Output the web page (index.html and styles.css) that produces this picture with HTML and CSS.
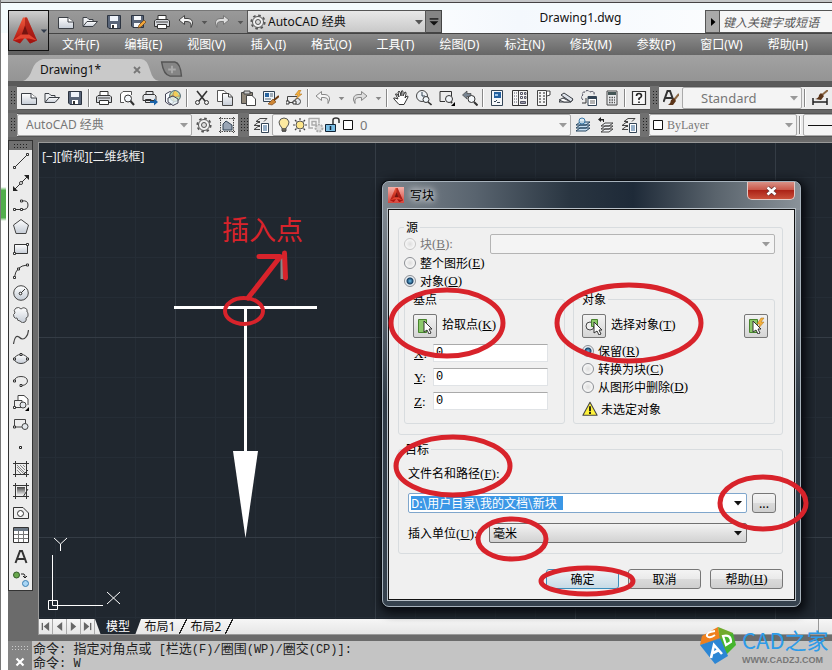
FILE: index.html
```html
<!DOCTYPE html>
<html lang="zh-CN">
<head>
<meta charset="utf-8">
<title>Drawing1.dwg</title>
<link rel="stylesheet" href="styles.css">
</head>
<body>
<svg class="defs" aria-hidden="true">
  <defs>
    <linearGradient id="shade" x1="0" y1="0" x2="0" y2="1"><stop offset="0" stop-color="#fff"/><stop offset="1" stop-color="#c5ccd6"/></linearGradient>
    <linearGradient id="dark" x1="0" y1="0" x2="0" y2="1"><stop offset="0" stop-color="#444"/><stop offset="1" stop-color="#eee"/></linearGradient>
    <linearGradient id="redA" x1="0" y1="0" x2="0" y2="1"><stop offset="0" stop-color="#ef5a3c"/><stop offset="1" stop-color="#a80f0c"/></linearGradient>
    <pattern id="grid" width="200" height="200" patternUnits="userSpaceOnUse" x="175" y="337">
      <path d="M40.500 0V200M80.500 0V200M120.500 0V200M160.500 0V200M0 40.500H200M0 80.500H200M0 120.500H200M0 160.500H200" stroke="#252d36"/>
      <path d="M.5 0V200M0 .5H200" stroke="#343c45"/>
    </pattern>
  </defs>
  <symbol id="new" viewBox="0 0 16 16"><path d="M.5 3.500H10L15.500 8V14.500H.5Z" fill="url(#shade)" stroke="#3b3f45"/><path d="M10 3.500V8H15.500" fill="#fff" stroke="#3b3f45"/></symbol>
  <symbol id="open" viewBox="0 0 16 16"><path d="M1 12V3.500H5L7 5.500H11V8" fill="#eef0f3" stroke="#3b3f45"/><path d="M1 12.500L5 7.500H15.500L11 12.500Z" fill="url(#shade)" stroke="#3b3f45"/></symbol>
  <symbol id="save" viewBox="0 0 16 16"><path d="M1.500 1.500H14.500V14.500H3L1.500 13Z" fill="#596579" stroke="#2c3440"/><path d="M4 2H12V7H4Z" fill="#eef3fa"/><path d="M5 10H11V14H5Z" fill="#fff"/><path d="M6 11H8V14H6Z" fill="#333"/></symbol>
  <symbol id="saveas" viewBox="0 0 16 16"><path d="M1.500 1.500H13.500V13.500H3L1.500 12Z" fill="#596579" stroke="#2c3440"/><path d="M4 2H11V6H4ZM4 9H10V13H4Z" fill="#f5f7fa"/><path d="M8 14L9 11L14 6L16 8L11 13Z" fill="#f0a53a" stroke="#68401a" stroke-width=".7"/></symbol>
  <symbol id="print" viewBox="0 0 16 16"><path d="M4 6V1.500H12V6" fill="#fff" stroke="#333"/><path d="M2 5.500H14L15.500 7V12.500H.5V7Z" fill="#d4d7dc" stroke="#333"/><path d="M3.500 10.500H12.500V14.500H3.500Z" fill="#fff" stroke="#333"/><path d="M2 8H14" stroke="#444"/></symbol>
  <symbol id="preview" viewBox="0 0 16 16"><path d="M5 12.500H1.500V4L4 1.500H12.500V5" fill="#fff" stroke="#555"/><circle cx="9" cy="8.500" r="3.500" fill="#f4f8fc" stroke="#333"/><path d="M11.500 11L15 15" stroke="#333" stroke-width="2"/></symbol>
  <symbol id="plot" viewBox="0 0 16 16"><path d="M4 5V1.500H11V5M2 4.500H12.500L14 6V10.500H1V6ZM3.500 9.500H9V12.500H3.500Z" fill="#e7e9ec" stroke="#333"/><path d="M8 11H12V8.500L16 12L12 15.500V13H8Z" fill="#1b63a8"/></symbol>
  <symbol id="globe" viewBox="0 0 16 16"><path d="M.5 4L5 1.500L9 4V12L5 15L.5 12Z" fill="#f8fbff" stroke="#445"/><circle cx="10" cy="6" r="5.400" fill="#bcdcab" stroke="#4a6570"/><path d="M10 1Q6 5 9 11M5 6H15" fill="none" stroke="#d08a3a"/><path d="M10 1Q14 3 13 6H9Q8 3 10 1Z" fill="#f4cd55"/><path d="M3 8L8 6L13 9V13L8 15.500L3 12Z" fill="#e6f1f5" fill-opacity=".75" stroke="#445"/></symbol>
  <symbol id="cut" viewBox="0 0 16 16"><path d="M3 1L11 11M13 1L5 11" stroke="#333" stroke-width="1.600"/><circle cx="3.500" cy="12.500" r="2" fill="none" stroke="#333"/><circle cx="12.500" cy="12.500" r="2" fill="none" stroke="#333"/></symbol>
  <symbol id="copy" viewBox="0 0 16 16"><path d="M.5 .5H7L9.500 3V11.500H.5Z" fill="#fff" stroke="#555"/><path d="M5.500 3.500H12L15.500 7V15.500H5.500Z" fill="url(#shade)" stroke="#444"/><path d="M11.500 3.500V7H15" fill="none" stroke="#444"/></symbol>
  <symbol id="paste" viewBox="0 0 16 16"><path d="M1.500 2.500H12.500V13.500H1.500Z" fill="#8f8678" stroke="#444"/><path d="M4 1H10V4H4Z" fill="#ccc" stroke="#444"/><path d="M6.500 5.500H12L15.500 9V15.500H6.500Z" fill="#fff" stroke="#444"/></symbol>
  <symbol id="match" viewBox="0 0 16 16"><path d="M.5 1.500H11.500V11.500H.5Z" fill="#eef4fa" stroke="#345"/><path d="M2 3H6V7H2Z" fill="#2865a0"/><path d="M7 4H10M7 6H10M2 9H8" stroke="#567"/><path d="M16 6L10 11" stroke="#6b3d14" stroke-width="2"/><path d="M10 9L13 12L9 15L5 14Z" fill="#ce8635" stroke="#6b3d14" stroke-width=".6"/></symbol>
  <symbol id="block" viewBox="0 0 16 16"><path d="M1.500 12.500V6.500H11M1.500 12.500H10" fill="none" stroke="#444"/><circle cx="11.500" cy="11.500" r="3" fill="#e5e8ec" stroke="#444"/><path d="M0 11H3V14H0ZM7 11H10V14H7Z" fill="#fff" stroke="#333"/><path d="M13 0L9 5H12L10 9L16 4H13L15 0Z" fill="#f6b13c" stroke="#a86a16" stroke-width=".5"/></symbol>
  <symbol id="undo" viewBox="0 0 16 16"><path d="M1 6L6.500 1.500V4.500H10Q15 5 14.500 10L13 13.500V10Q12.500 7.500 9 7.500H6.500V10.500Z" fill="#f5f5f5" stroke="currentColor"/></symbol>
  <symbol id="redo" viewBox="0 0 16 16"><path d="M15 6L9.500 1.500V4.500H6Q1 5 1.500 10L3 13.500V10Q3.500 7.500 7 7.500H9.500V10.500Z" fill="#ddd" stroke="currentColor"/></symbol>
  <symbol id="hand" viewBox="0 0 16 16"><path d="M5 9L3 5Q1.500 3.500 4 4L6 7L5 2Q6 .5 7 2L8 6L8.500 1Q10 0 10 2V6L12 2Q13.500 2 13 4L12 8L14 6Q16 6 14.500 8L11 14.500H6L1 9Q0 7.500 2 8Z" fill="#fff" stroke="#333"/></symbol>
  <symbol id="zoomrt" viewBox="0 0 16 16"><circle cx="6" cy="6" r="5.500" fill="#eef2f6" stroke="#444"/><path d="M6 2V6H9" fill="none" stroke="#345"/><circle cx="10" cy="9.500" r="3" fill="#eef5fa" stroke="#333"/><path d="M12 12L15.500 15" stroke="#333" stroke-width="1.600"/></symbol>
  <symbol id="zoomwin" viewBox="0 0 16 16"><path d="M1 1.500H12.500V6M6 11.500H1V1.500" fill="none" stroke="#333"/><circle cx="10" cy="9" r="3.500" fill="#f0f4f8" stroke="#333"/><path d="M12 12L13 13" stroke="#333" stroke-width="2"/><path d="M12 16H16V12Z"/></symbol>
  <symbol id="zoomprev" viewBox="0 0 16 16"><path d="M.5 5L5 1V3.500H9V6.500H5V9Z" fill="#788491" stroke="#444" stroke-width=".7"/><circle cx="9.500" cy="9" r="3.500" fill="#f3f7fa" stroke="#333"/><path d="M12 12L15.500 15.500" stroke="#333" stroke-width="2"/></symbol>
  <symbol id="props" viewBox="0 0 16 16"><path d="M2.500 .5H13.500V15.500H2.500Z" fill="#f4f7fa" stroke="#345"/><path d="M5 2H12V8H5Z" fill="#2461a0"/><path d="M6 4H9V6H6Z" fill="#9fc5e8"/><path d="M5 11L6 12L8 10M8 12.500H11" fill="none" stroke="#345"/></symbol>
  <symbol id="center" viewBox="0 0 16 16"><path d="M.5 .5H15.500V15.500H.5Z" fill="#f5f5f5" stroke="#333"/><path d="M6.500 1V15" stroke="#444"/><path d="M2 3H5M2 6H5M2 9H5M2 12H5" stroke="#556" stroke-dasharray="1 1"/><path d="M8.500 2.500H10.500V4.500H8.500ZM12.500 2.500H14V4.500H12.500ZM8.500 6.500H10.500V8.500H8.500ZM12.500 6.500H14V8.500H12.500Z" fill="#fff" stroke="#556"/><path d="M8.500 11.500H13.500V13.500H8.500Z" fill="#99a" stroke="#556"/></symbol>
  <symbol id="palette" viewBox="0 0 16 16"><path d="M2.500 .5H11.500V15.500H2.500Z" fill="#f5f5f5" stroke="#444"/><path d="M4 3H6M4 6H6M4 9H6M4 12H6M8 3H10M8 6H10M8 9H10M8 12H10" stroke="#666" stroke-width="1.500"/><path d="M12 1H15V5L12 6" fill="#fff" stroke="#444"/></symbol>
  <symbol id="sheets" viewBox="0 0 16 16"><path d="M1 12H11L15 10L13 8H5Z" fill="#e4e8ee" stroke="#3b3f45"/><path d="M1 10L5 8L13 12H6Z" fill="#fff" stroke="#3b3f45"/><path d="M3 5L6 3L15 9L13 12Z" fill="#dde2ea" stroke="#3b3f45"/></symbol>
  <symbol id="markup" viewBox="0 0 16 16"><path d="M2 10Q-1 7 2 5Q0 2 4 2Q6-1 9 2Q14 0 13 5" fill="none" stroke="#445" stroke-dasharray="3 1"/><path d="M7 6.500H15.500V15.500H7Z" fill="#fff" stroke="#345"/><path d="M7 8H15" stroke="#345" stroke-width="2"/><path d="M9 11H14M9 13H14" stroke="#666"/><path d="M1 13H5V8" fill="none" stroke="#333"/></symbol>
  <symbol id="calc" viewBox="0 0 16 16"><path d="M3 1H13V15H3Z" fill="#e8eaec" stroke="#444"/><path d="M4 2H12V5H4Z" fill="#455"/><path d="M5 7.500H11M5 10H11M5 12.500H11" stroke="#555" stroke-width="1.500" stroke-dasharray="1.500 1"/></symbol>
  <symbol id="help" viewBox="0 0 16 16"><path d="M1.500 1.500H14.500V14.500H1.500Z" fill="#f8f8f8" stroke="#333" stroke-width="1.200"/><path d="M5.500 6Q5.500 3.500 8 3.500T10.500 6Q10.500 7 8 8.500V10M8 11.500V13" fill="none" stroke="#222" stroke-width="1.600"/></symbol>
  <symbol id="textA" viewBox="0 0 16 16"><path d="M.5 12L4.500 1H7L11 12M2.500 8H9" fill="none" stroke="#333" stroke-width="2"/><path d="M16 4L11 10" stroke="#8c6844" stroke-width="2"/><path d="M11 8L13 11L10 15L5 15Q8 13 8 10Z" fill="#5c3519"/></symbol>
  <symbol id="dimb" viewBox="0 0 16 16"><path d="M1 8V15M15 8V15M1 12H15" stroke="#222" stroke-width="1.500"/><path d="M16 0L10 5" stroke="#8c6844" stroke-width="2"/><path d="M9 3L12 6L9 10L3 9Q7 8 7 5Z" fill="#5c3519"/></symbol>
  <symbol id="gear" viewBox="0 0 16 16"><circle cx="8" cy="8" r="6.700" fill="none" stroke="#555" stroke-width="1.800" stroke-dasharray="2.600 2.660"/><circle cx="8" cy="8" r="5.500" fill="#f1f1f1" stroke="#555"/><circle cx="8" cy="8" r="2.500" fill="#ddd" stroke="#555"/></symbol>
  <symbol id="wsicon" viewBox="0 0 16 16"><path d="M1.500 0V16M14.500 0V16M0 1.500H16M0 14.500H16" stroke="#444" stroke-dasharray="1.500 1"/><path d="M4 13V7L7 4L13 8V13Z" fill="#99a5b5" stroke="#345"/></symbol>
  <symbol id="layers" viewBox="0 0 16 16"><path d="M7 4.500H3L7 1.500H14L11 4.500M7 8.500H1L5 5.500H7M7 12.500H1L5 9.500H7" fill="none" stroke="#444"/><path d="M8.500 6.500H15.500V15.500H8.500Z" fill="#fff" stroke="#345"/><path d="M10 9H14M10 11H14M10 13H14" stroke="#2d5e8f"/></symbol>
  <symbol id="laycur" viewBox="0 0 16 16"><path d="M1 14L5 11H15L11 14ZM1 11L5 8H15L11 11ZM1 8L5 5H15L11 8Z" fill="#c6def2" stroke="#24445e"/><circle cx="7" cy="4" r="3" fill="#d8ecf8" fill-opacity=".7" stroke="#3a78a8"/></symbol>
  <symbol id="layprev" viewBox="0 0 16 16"><path d="M3 15L7 12H15L11 15ZM3 12L7 9H15L11 12ZM3 9L7 6H15L11 9Z" fill="#f0f2f5" stroke="#444"/><path d="M0 2.500L3 0V2H6V5H5V3.500H3V5Z" fill="#222"/></symbol>
  <symbol id="bulb" viewBox="0 0 16 16"><path d="M6 11Q3 8 3 5Q4 1 8 1T13 5Q13 8 10 11V14H6Z" fill="#fdeaa0" stroke="#555"/><path d="M6 12H10M6 14H10" stroke="#444" stroke-width="1.500"/></symbol>
  <symbol id="sun" viewBox="0 0 16 16"><path d="M8 1V3M8 13V15M1 8H3M13 8H15M3 3L4.500 4.500M11.500 11.500L13 13M13 3L11.500 4.500M4.500 11.500L3 13" stroke="#444" stroke-width="1.200"/><circle cx="8" cy="8" r="4" fill="#fde58a" stroke="#555"/></symbol>
  <symbol id="vpfrz" viewBox="0 0 16 16"><path d="M1 1.500H11V6M5 11H1V1M4 4.500H8V8H4Z" fill="none" stroke="#aaa" stroke-width="1.400"/><circle cx="11" cy="11" r="3.500" fill="#ddd" stroke="#aaa" stroke-width="2" stroke-dasharray="2 1"/></symbol>
  <symbol id="lock" viewBox="0 0 16 16"><path d="M9 7V3Q9 1 12 1T15 3V6" fill="none" stroke="#333" stroke-width="1.500"/><path d="M1.500 7.500H11.500V14.500H1.500Z" fill="#79bde4" stroke="#123"/><path d="M6.500 9V13" stroke="#123" stroke-width="1.500"/></symbol>
  <symbol id="swatch" viewBox="0 0 16 16"><path d="M3.500 3.500H12.500V12.500H3.500Z" fill="#fff" stroke="#111"/></symbol>
  <symbol id="caret" viewBox="0 0 10 6"><path d="M1 1H9L5 5.500Z" fill="currentColor"/></symbol>
  <symbol id="line" viewBox="0 0 16 16"><path d="M2 14L14 2" stroke="#333"/><path d="M.5 13.500H2.500V15.500H.5ZM13.500 .5H15.500V2.500H13.500Z" fill="#fff" stroke="#333"/></symbol>
  <symbol id="xline" viewBox="0 0 16 16"><path d="M1 15L15 1" stroke="#333"/><path d="M0 11V16H5ZM16 5V0H11Z" fill="#222"/><circle cx="8" cy="8" r="1.500" fill="#fff" stroke="#333"/></symbol>
  <symbol id="pline" viewBox="0 0 16 16"><path d="M2 12.500H9M9 4Q15 3 15 8T9 12.500" fill="none" stroke="#333"/><path d="M.5 11.500H2.500V13.500H.5ZM7.500 11.500H9.500V13.500H7.500ZM7.500 3H9.500V5H7.500Z" fill="#fff" stroke="#333"/></symbol>
  <symbol id="polygon" viewBox="0 0 16 16"><path d="M8 .5L15.500 6L13 14.500H3L.5 6Z" fill="url(#shade)" stroke="#444"/></symbol>
  <symbol id="rect" viewBox="0 0 16 16"><path d="M1.500 3.500H14.500V12.500H1.500Z" fill="url(#shade)" stroke="#333"/><path d="M.5 11.500H2.500V13.500H.5ZM13.500 2.500H15.500V4.500H13.500Z" fill="#fff" stroke="#333"/></symbol>
  <symbol id="arc" viewBox="0 0 16 16"><path d="M1.500 14Q3 3 14 2" fill="none" stroke="#333"/><path d="M.5 13.500H2.500V15.500H.5ZM4.500 5H6.500V7H4.500ZM13.500 1H15.500V3H13.500Z" fill="#fff" stroke="#333"/></symbol>
  <symbol id="circle" viewBox="0 0 16 16"><circle cx="8" cy="8" r="7.300" fill="url(#shade)" stroke="#444"/><path d="M7.500 8.500L12 4" stroke="#333"/><circle cx="7.500" cy="8.500" r="1.300" fill="#fff" stroke="#222"/></symbol>
  <symbol id="cloud" viewBox="0 0 16 16"><path d="M8 2Q6-.5 3 1Q0 3 2 6Q-.5 7 1 10Q2 12 4 11Q4 14 7 14Q9 17 12 15Q14 13 13 11Q16 10 15 7Q15 5 14 5Q15 2 12 1Q10 0 8 2Z" fill="url(#shade)" stroke="#555"/></symbol>
  <symbol id="spline" viewBox="0 0 16 16"><path d="M.5 15Q2 5 6 8Q10 12 13 8Q15 6 15.500 1" fill="none" stroke="#444" stroke-width="1.200"/></symbol>
  <symbol id="ellipse" viewBox="0 0 16 16"><ellipse cx="8" cy="8" rx="6.500" ry="4.500" fill="url(#shade)" stroke="#444"/><path d="M.5 7H2.500V9H.5ZM13.500 7H15.500V9H13.500ZM7 2.500H9V4.500H7Z" fill="#fff" stroke="#333"/></symbol>
  <symbol id="earc" viewBox="0 0 16 16"><path d="M1.500 8Q2 3.500 8 3.500T14.500 8Q14 12 9 12.500" fill="none" stroke="#444"/><path d="M.5 7H2.500V9H.5ZM7 11.500H9V13.500H7Z" fill="#fff" stroke="#333"/></symbol>
  <symbol id="insert" viewBox="0 0 16 16"><path d="M5 5V.5H11L15 4V10" fill="#fff" stroke="#444"/><path d="M1.500 12V5.500H9V12.500H1.500" fill="#eee" stroke="#444"/><circle cx="10" cy="10" r="3" fill="#e4e8ec" stroke="#444"/><path d="M.5 11.500H2.500V13.500H.5Z" fill="#fff" stroke="#333"/><path d="M12 16H16V12Z"/></symbol>
  <symbol id="mkblock" viewBox="0 0 16 16"><path d="M1.500 11V2.500H12.500V10H1.500" fill="#eee" stroke="#444"/><circle cx="12" cy="9.500" r="3" fill="#e4e8ec" stroke="#444"/><path d="M.5 9H2.500V11H.5Z" fill="#fff" stroke="#333"/></symbol>
  <symbol id="point" viewBox="0 0 16 16"><path d="M6.500 7.500H8.500V9.500H6.500Z" fill="#fff" stroke="#222"/></symbol>
  <symbol id="hatch" viewBox="0 0 16 16"><path d="M2.500 0V16M13.500 0V16M0 2.500H16M0 13.500H16" stroke="#333"/><path d="M4 9L8 13M4 6L11 13M4 4L12 12M7 4L12 9M10 4L12 6" stroke="#888"/><path d="M10 14L15 9" stroke="#333"/></symbol>
  <symbol id="gradient" viewBox="0 0 16 16"><path d="M2.500 0V16M13.500 0V16M0 2.500H16M0 13.500H16" stroke="#333"/><path d="M4 4H12V12H4Z" fill="url(#dark)"/><path d="M10 14L15 6" stroke="#333"/></symbol>
  <symbol id="region" viewBox="0 0 16 16"><path d="M.5 2.500H10L15.500 8V13.500H.5Z" fill="#f0f0f0" stroke="#333"/><circle cx="7.500" cy="8.500" r="3" fill="#fff" stroke="#333"/></symbol>
  <symbol id="table" viewBox="0 0 16 16"><path d="M.5 .5H15.500V15.500H.5Z" fill="#fff" stroke="#333"/><path d="M1 2.500H15" stroke="#6b7784" stroke-width="3"/><path d="M5.500 4V15M10.500 4V15M1 7.500H15M1 11.500H15" stroke="#777"/></symbol>
  <symbol id="mtext" viewBox="0 0 16 16"><path d="M2.500 14L7 2H9L13.500 14M4.500 10H11.500" fill="none" stroke="#333" stroke-width="2"/></symbol>
  <symbol id="addsel" viewBox="0 0 16 16"><circle cx="3.500" cy="4" r="3" fill="#69a84e" stroke="#345c2a"/><path d="M8 3H11Q12 4 12 6M10 5L12 7L14 5" fill="none" stroke="#222"/><circle cx="12.500" cy="12.500" r="3" fill="#a9d6f5" stroke="#3b7eb0"/></symbol>
  <symbol id="alogo" viewBox="0 0 24 26"><path d="M10 0H14L24 23L17 26L12 20L7 26L0 23Z" fill="url(#redA)"/><path d="M12 0H14L24 23L17 26L12 17Z" fill="#9c1512" opacity=".65"/><path d="M12 8L16 19H8Z" fill="#751410"/><path d="M0 23L8 17H16L24 23L16 21H8Z" fill="#e34531"/></symbol>
  <symbol id="cursor" viewBox="0 0 16 16"><path d="M6 3V14L9 12L11 16L13 15L11 11H14Z" fill="#fff" stroke="#333"/></symbol>
</svg>

<div class="window">
  <header class="top">
    <button class="appbtn" aria-label="应用程序菜单"><svg class="applogo"><use href="#alogo"/></svg><svg class="caret"><use href="#caret"/></svg></button>
    <div class="bars">
      <div class="titlebar">
        <div class="quick">
          <button aria-label="新建"><svg class="ic"><use href="#new"/></svg></button>
          <button aria-label="打开"><svg class="ic"><use href="#open"/></svg></button>
          <button aria-label="保存"><svg class="ic"><use href="#save"/></svg></button>
          <button aria-label="另存为"><svg class="ic"><use href="#saveas"/></svg></button>
          <button aria-label="打印"><svg class="ic"><use href="#print"/></svg></button>
          <button aria-label="放弃"><svg class="ic"><use href="#undo"/></svg></button>
          <button class="drop" aria-label="放弃列表"><svg class="caret small"><use href="#caret"/></svg></button>
          <button class="muted" aria-label="重做"><svg class="ic"><use href="#redo"/></svg></button>
          <button class="drop" aria-label="重做列表"><svg class="caret small"><use href="#caret"/></svg></button>
        </div>
        <div class="combo workspace"><svg class="ic"><use href="#gear"/></svg><select aria-label="工作空间"><option>AutoCAD 经典</option></select><svg class="caret"><use href="#caret"/></svg></div>
        <button class="more" aria-label="自定义"><svg class="ic" viewBox="0 0 16 16"><path d="M3 4.500H13" stroke="#111" stroke-width="1.500"/><path d="M3 7H13L8 12Z" fill="#111"/></svg></button>
        <div class="filename">Drawing1.dwg</div>
        <div class="search"><button aria-label="展开"><svg viewBox="0 0 6 10"><path d="M1 1L5.500 5L1 9Z"/></svg></button><input type="text" aria-label="搜索" placeholder="键入关键字或短语"></div>
      </div>
      <nav class="menu">
        <a href="#">文件(F)</a><a href="#">编辑(E)</a><a href="#">视图(V)</a><a href="#">插入(I)</a><a href="#">格式(O)</a><a href="#">工具(T)</a><a href="#">绘图(D)</a><a href="#">标注(N)</a><a href="#">修改(M)</a><a href="#">参数(P)</a><a href="#">窗口(W)</a><a href="#">帮助(H)</a>
      </nav>
    </div>
  </header>

  <div class="doctabs">
    <div class="doctab"><svg class="tabshape" viewBox="0 0 136 22" preserveAspectRatio="none"><path d="M0 22Q6 20 9 11T20 0H118Q124 0 127 11T136 22Z" fill="#c9c9c9"/></svg><span>Drawing1*</span><button aria-label="关闭标签"><svg viewBox="0 0 8 8"><path d="M1 1L7 7M7 1L1 7" stroke="#777" stroke-width="1.800"/></svg></button></div>
    <button class="addtab" aria-label="新图形"><svg viewBox="0 0 24 18"><path d="M1 1H15Q21 2 22 16H10Q3 15 1 1Z" fill="#858585" stroke="#555" stroke-width="1.500"/><path d="M12 5V13M8 9H16" stroke="#aaa" stroke-width="2"/></svg></button>
  </div>

  <div class="toolrow">
    <i class="grip"></i>
    <div class="tools">
      <button aria-label="新建"><svg class="ic"><use href="#new"/></svg></button>
      <button aria-label="打开"><svg class="ic"><use href="#open"/></svg></button>
      <button aria-label="保存"><svg class="ic"><use href="#save"/></svg></button>
      <i class="sep"></i>
      <button aria-label="打印"><svg class="ic"><use href="#print"/></svg></button>
      <button aria-label="打印预览"><svg class="ic"><use href="#preview"/></svg></button>
      <button aria-label="发布"><svg class="ic"><use href="#plot"/></svg></button>
      <button aria-label="三维打印"><svg class="ic"><use href="#globe"/></svg></button>
      <i class="sep"></i>
      <button aria-label="剪切"><svg class="ic"><use href="#cut"/></svg></button>
      <button aria-label="复制"><svg class="ic"><use href="#copy"/></svg></button>
      <button aria-label="粘贴"><svg class="ic"><use href="#paste"/></svg></button>
      <button aria-label="特性匹配"><svg class="ic"><use href="#match"/></svg></button>
      <button aria-label="块编辑器"><svg class="ic"><use href="#block"/></svg></button>
      <i class="sep"></i>
      <button class="muted" aria-label="放弃"><svg class="ic"><use href="#undo"/></svg></button>
      <button class="drop muted" aria-label="放弃列表"><svg class="caret small"><use href="#caret"/></svg></button>
      <button class="muted" aria-label="重做"><svg class="ic"><use href="#redo"/></svg></button>
      <button class="drop muted" aria-label="重做列表"><svg class="caret small"><use href="#caret"/></svg></button>
      <i class="sep narrow"></i>
      <button aria-label="实时平移"><svg class="ic"><use href="#hand"/></svg></button>
      <button aria-label="实时缩放"><svg class="ic"><use href="#zoomrt"/></svg></button>
      <button aria-label="窗口缩放"><svg class="ic"><use href="#zoomwin"/></svg></button>
      <button aria-label="缩放上一个"><svg class="ic"><use href="#zoomprev"/></svg></button>
      <i class="sep narrow"></i>
      <button aria-label="特性"><svg class="ic"><use href="#props"/></svg></button>
      <button aria-label="设计中心"><svg class="ic"><use href="#center"/></svg></button>
      <button aria-label="工具选项板"><svg class="ic"><use href="#palette"/></svg></button>
      <button aria-label="图纸集"><svg class="ic"><use href="#sheets"/></svg></button>
      <button aria-label="标记集"><svg class="ic"><use href="#markup"/></svg></button>
      <button aria-label="快速计算器"><svg class="ic"><use href="#calc"/></svg></button>
      <i class="sep narrow"></i>
      <button aria-label="帮助"><svg class="ic"><use href="#help"/></svg></button>
    </div>
    <i class="grip"></i>
    <div class="tools grow">
      <button aria-label="文字样式"><svg class="ic"><use href="#textA"/></svg></button>
      <div class="combo style"><select aria-label="文字样式名"><option>Standard</option></select><svg class="caret"><use href="#caret"/></svg></div>
      <i class="sep"></i>
      <button aria-label="标注样式"><svg class="ic"><use href="#dimb"/></svg></button>
    </div>
  </div>

  <div class="toolrow">
    <i class="grip"></i>
    <div class="tools">
      <div class="combo ws2"><select aria-label="工作空间"><option>AutoCAD 经典</option></select><svg class="caret"><use href="#caret"/></svg></div>
      <button aria-label="工作空间设置"><svg class="ic"><use href="#gear"/></svg></button>
      <button aria-label="我的工作空间"><svg class="ic"><use href="#wsicon"/></svg></button>
    </div>
    <i class="grip wide"></i>
    <div class="tools">
      <button aria-label="图层特性"><svg class="ic"><use href="#layers"/></svg></button>
      <div class="combo layer"><svg class="ic"><use href="#bulb"/></svg><svg class="ic"><use href="#sun"/></svg><svg class="ic"><use href="#vpfrz"/></svg><svg class="ic"><use href="#lock"/></svg><svg class="ic"><use href="#swatch"/></svg><select aria-label="图层"><option>0</option></select><svg class="caret"><use href="#caret"/></svg></div>
      <button aria-label="置为当前"><svg class="ic"><use href="#laycur"/></svg></button>
      <button aria-label="上一个图层"><svg class="ic"><use href="#layprev"/></svg></button>
      <button aria-label="图层状态"><svg class="ic"><use href="#layers"/></svg></button>
    </div>
    <i class="grip"></i>
    <div class="tools grow">
      <div class="combo color"><svg class="ic"><use href="#swatch"/></svg><select aria-label="颜色"><option>ByLayer</option></select><svg class="caret"><use href="#caret"/></svg></div>
      <i class="sep"></i>
      <div class="combo linetype"><svg class="sample" viewBox="0 0 60 4" preserveAspectRatio="xMinYMid slice"><path d="M0 2.500H60" stroke="#111"/></svg></div>
    </div>
  </div>

  <main class="work">
    <aside class="palette">
      <i class="grip flat"></i>
      <button aria-label="直线"><svg class="ic"><use href="#line"/></svg></button>
      <button aria-label="构造线"><svg class="ic"><use href="#xline"/></svg></button>
      <button aria-label="多段线"><svg class="ic"><use href="#pline"/></svg></button>
      <button aria-label="多边形"><svg class="ic"><use href="#polygon"/></svg></button>
      <button aria-label="矩形"><svg class="ic"><use href="#rect"/></svg></button>
      <button aria-label="圆弧"><svg class="ic"><use href="#arc"/></svg></button>
      <button aria-label="圆"><svg class="ic"><use href="#circle"/></svg></button>
      <button aria-label="修订云线"><svg class="ic"><use href="#cloud"/></svg></button>
      <button aria-label="样条曲线"><svg class="ic"><use href="#spline"/></svg></button>
      <button aria-label="椭圆"><svg class="ic"><use href="#ellipse"/></svg></button>
      <button aria-label="椭圆弧"><svg class="ic"><use href="#earc"/></svg></button>
      <button aria-label="插入块"><svg class="ic"><use href="#insert"/></svg></button>
      <button aria-label="创建块"><svg class="ic"><use href="#mkblock"/></svg></button>
      <button aria-label="点"><svg class="ic"><use href="#point"/></svg></button>
      <button aria-label="图案填充"><svg class="ic"><use href="#hatch"/></svg></button>
      <button aria-label="渐变色"><svg class="ic"><use href="#gradient"/></svg></button>
      <button aria-label="面域"><svg class="ic"><use href="#region"/></svg></button>
      <button aria-label="表格"><svg class="ic"><use href="#table"/></svg></button>
      <button aria-label="多行文字"><svg class="ic"><use href="#mtext"/></svg></button>
      <button aria-label="添加选定对象"><svg class="ic"><use href="#addsel"/></svg></button>
    </aside>
    <div class="viewport">
      <div class="canvas">
        <svg class="drawing"><g transform="translate(-39 -143)">
          <rect x="0" y="0" width="3000" height="2000" fill="url(#grid)"/>
          <path d="M174 307.500H317M245.500 308V452" stroke="#fff" stroke-width="3"/>
          <path d="M233 451H258L245.500 538Z" fill="#fff"/>
          <path d="M52.500 555V605.500H103M48.500 600.500H57.500V609.500H48.500ZM54 538L60.500 544L67 538M60.500 544V551M107 592L120 604M120 592L107 604" fill="none" stroke="#fff"/>
        </g></svg>
        <div class="viewlabel">[−][俯视][二维线框]</div>
      </div>
      <div class="layouts">
        <button class="nav" aria-label="第一个"><svg viewBox="0 0 10 10"><path d="M1.500 1V9" stroke="#666" stroke-width="1.500"/><path d="M9 0V10L3 5Z"/></svg></button>
        <button class="nav" aria-label="上一个"><svg viewBox="0 0 10 10"><path d="M8 0V10L2 5Z"/></svg></button>
        <button class="nav" aria-label="下一个"><svg viewBox="0 0 10 10"><path d="M2 0V10L8 5Z"/></svg></button>
        <button class="nav" aria-label="最后一个"><svg viewBox="0 0 10 10"><path d="M8.500 1V9" stroke="#666" stroke-width="1.500"/><path d="M1 0V10L7 5Z"/></svg></button>
        <button class="model">模型</button>
        <button class="layout">布局1</button><i class="slash"></i>
        <button class="layout">布局2</button><i class="slash"></i>
        <i class="scrollend"></i>
      </div>
    </div>
  </main>

  <footer class="command">
    <div class="cmdgrip"><i class="dots"></i><button aria-label="关闭命令行"><svg viewBox="0 0 10 10"><path d="M1.500 1.500L8.500 8.500M8.500 1.500L1.500 8.500" stroke="#fff" stroke-width="2.200"/></svg></button></div>
    <div class="lines">
      <p>命令<b>: </b>指定对角点或<b> [</b>栏选<b>(F)/</b>圈围<b>(WP)/</b>圈交<b>(CP)]:</b></p>
      <p>命令<b>: W</b></p>
    </div>
    <div class="brand">
      <svg class="cube" viewBox="0 0 36 38"><path d="M2 9L18 0L20 12L0 18Z" fill="#ef7d1b"/><path d="M18 0L33 6L36 18L25 29L20 12Z" fill="#46b52e"/><path d="M0 18L20 11L28 29L15 37Z" fill="#2c86d4"/><path d="M2 9L18 0L33 6L20 12L0 18Z" fill="#f08a22" opacity=".25"/><path d="M11 31L14 18L22 27M13 26L19 23" fill="none" stroke="#fff" stroke-width="2.600"/><path d="M23 9Q31 7 31 15L26 18Z" fill="none" stroke="#fff" stroke-width="2.200"/><path d="M15 4Q6 5 7 9Q9 12 15 8" fill="none" stroke="#fff" stroke-width="2"/></svg>
      <div class="brandtext"><strong>CAD之家</strong><span>WWW.CADZJ.COM</span></div>
    </div>
  </footer>
</div>

<section class="dialog" role="dialog" aria-label="写块">
  <div class="dlgtitle"><span class="dlgicon"><svg><use href="#alogo"/></svg></span><h1>写块</h1><button class="close" aria-label="关闭"><svg viewBox="0 0 12 10"><path d="M2 1.500L10 8.500M10 1.500L2 8.500" stroke="#633" stroke-width="4"/><path d="M2 1.500L10 8.500M10 1.500L2 8.500" stroke="#fff" stroke-width="2.600"/></svg></button></div>
  <form class="client">
    <fieldset class="group source">
      <legend>源</legend>
      <div class="row first"><label class="radio off"><input type="radio" name="src" disabled>块<b>(<u>B</u>):</b></label><div class="combo dlg off"><select aria-label="块" disabled><option></option></select><svg class="caret"><use href="#caret"/></svg></div></div>
      <label class="radio"><input type="radio" name="src">整个图形<b>(<u>E</u>)</b></label>
      <label class="radio"><input type="radio" name="src" checked>对象<b>(<u>O</u>)</b></label>
      <div class="pair">
        <fieldset class="group base">
          <legend>基点</legend>
          <div class="pick"><button type="button" id="pickpt" class="iconbtn" aria-label="拾取点"><svg viewBox="0 0 18 18"><path d="M2.500 2.500H10.500V15.500H2.500Z" fill="#8cc96b" stroke="#48842e"/><use href="#cursor" x="2" y="1" width="16" height="16"/></svg></button><label for="pickpt">拾取点<b>(<u>K</u>)</b></label></div>
          <div class="coord"><label for="cx"><b><u>X</u>:</b></label><input id="cx" type="text" value="0"></div>
          <div class="coord"><label for="cy"><b><u>Y</u>:</b></label><input id="cy" type="text" value="0"></div>
          <div class="coord"><label for="cz"><b><u>Z</u>:</b></label><input id="cz" type="text" value="0"></div>
        </fieldset>
        <fieldset class="group objs">
          <legend>对象</legend>
          <div class="pick"><button type="button" id="selobj" class="iconbtn" aria-label="选择对象"><svg viewBox="0 0 18 18"><circle cx="5" cy="9" r="4" fill="#eee" stroke="#444"/><path d="M6.500 2.500H12.500V9.500H6.500Z" fill="#8cc96b" stroke="#48842e"/><use href="#cursor" x="3" y="2" width="16" height="16"/></svg></button><label for="selobj">选择对象<b>(<u>T</u>)</b></label><button type="button" class="iconbtn quicksel" aria-label="快速选择"><svg viewBox="0 0 18 18"><path d="M2.500 2.500H10.500V15.500H2.500Z" fill="#8cc96b" stroke="#48842e"/><path d="M14 1L10 7H13L11 12L17 5H14L17 1Z" fill="#f6b13c" stroke="#a8701a" stroke-width=".5"/><use href="#cursor" x="0" y="1" width="16" height="16"/></svg></button></div>
          <label class="radio"><input type="radio" name="keep" checked>保留<b>(<u>R</u>)</b></label>
          <label class="radio"><input type="radio" name="keep">转换为块<b>(<u>C</u>)</b></label>
          <label class="radio"><input type="radio" name="keep">从图形中删除<b>(<u>D</u>)</b></label>
          <p class="warn"><svg viewBox="0 0 18 18"><path d="M9 1.500L17 16H1Z" fill="#fff23a" stroke="#444" stroke-width="1.200" stroke-linejoin="round"/><path d="M9 6V11.500M9 12.500V14.500" stroke="#111" stroke-width="2"/></svg>未选定对象</p>
        </fieldset>
      </div>
    </fieldset>
    <fieldset class="group target">
      <legend>目标</legend>
      <label class="pathlabel" for="path">文件名和路径<b>(<u>F</u>):</b></label>
      <div class="pathrow"><div class="combo dlg edit"><span class="selected"><input id="path" type="text" value="D:\用户目录\我的文档\新块"></span><svg class="caret"><use href="#caret"/></svg></div><button type="button" class="btn browse" aria-label="浏览">...</button></div>
      <div class="unitrow"><label for="unit">插入单位<b>(<u>U</u>):</b></label><div class="combo dlg unit"><select id="unit"><option>毫米</option></select><svg class="caret"><use href="#caret"/></svg></div></div>
    </fieldset>
    <div class="actions"><button type="button" class="btn default">确定</button><button type="button" class="btn">取消</button><button type="button" class="btn">帮助<b>(<u>H</u>)</b></button></div>
  </form>
</section>

<svg class="notes" width="832" height="670" viewBox="0 0 832 670">
  <g fill="none" stroke="#d8232b" stroke-width="5">
    <ellipse cx="447" cy="323" rx="56" ry="33"/>
    <ellipse cx="629" cy="323" rx="72" ry="38"/>
    <ellipse cx="453" cy="466" rx="57" ry="29"/>
    <ellipse cx="512" cy="539" rx="34" ry="20"/>
    <ellipse cx="763" cy="503" rx="43" ry="26"/>
    <ellipse cx="587" cy="581" rx="46" ry="13"/>
    <ellipse cx="244" cy="311" rx="19" ry="13" stroke-width="4"/>
    <path d="M282 258V279" stroke="#888" stroke-width="3"/>
    <path d="M248 298L280 257M259 256.500H280M284.500 253L285.500 278" stroke-linecap="round"/>
  </g>
  <text x="222" y="240" class="notetext">插入点</text>
</svg>
</body>
</html>
```
FILE: styles.css
```css
* { box-sizing: border-box; }
body {
  margin: 0;
  overflow: hidden;
  font: 12px/16px "Noto Sans", "Noto Sans CJK SC", sans-serif;
  color: #222;
  background: #fff;
}
button, input, select { font: inherit; color: inherit; margin: 0; padding: 0; }
button { border: 0; background: none; display: grid; place-items: center; }
b { font-weight: normal; }
svg { display: block; flex: none; }
.defs { position: absolute; width: 0; height: 0; }
.ic { width: 16px; height: 16px; }
.caret { width: 10px; height: 6px; color: #555; }
.caret.small { width: 7px; height: 5px; }

.window {
  min-height: 100vh;
  display: flex;
  flex-direction: column;
  padding: 10px 0 0 7px;
  border-left: 1px solid #777;
  background:
    linear-gradient(#fff0, #52ae4c 10%, #52ae4c 90%, #fff0) 0 187px / 5px 34px no-repeat,
    linear-gradient(#c4c8c8 0 2px, #444 2px 3px, #f4fcfd 3px 33px, #fff 33px);
}

/* title bar and menu */
.top { display: flex; background: linear-gradient(#9a9a9a, #5f5f5f); height: 45px; }
.appbtn {
  width: 41px;
  height: 41px;
  border: 1px solid #111;
  background: linear-gradient(#cfcfcf, #8d8d8d 60%, #777);
  display: flex;
  align-items: center;
  justify-content: center;
  gap: 3px;
  padding-left: 3px;
}
.appbtn .applogo { width: 24px; height: 27px; }
.appbtn .caret { width: 8px; height: 6px; color: #333d4d; }
.bars { flex: 1; min-width: 0; }
.titlebar {
  display: flex;
  height: 24px;
  background: linear-gradient(90deg, #e6f8fb, #fff 40%, #f4f8fd 60%, #fff);
  border-bottom: 1px solid #444;
}
.quick {
  display: flex;
  align-items: center;
  padding-left: 5px;
  background: linear-gradient(#999, #8c8c8c);
  border-top: 1px solid #777;
  width: 198px;
}
.quick button { width: 24px; height: 22px; color: #444; }
.quick .drop { width: 12px; }
.quick .muted { color: #777; }
.combo { display: flex; align-items: center; border: 1px solid #aaa; border-radius: 2px; background: #f4f4f4; }
.combo select { appearance: none; border: 0; background: none; flex: 1; min-width: 0; outline: 0; }
.combo.workspace { width: 179px; border: 1px solid #555; border-radius: 0; background: linear-gradient(#e8e8e8, #c9c9c9); padding: 0 1px 0 2px; gap: 2px; color: #111; }
.more { width: 16px; background: #858585; border: 1px solid #444; border-left: 0; }
.more svg { width: 14px; height: 14px; }
.filename { flex: 1; text-align: center; color: #111; padding-left: 14px; white-space: nowrap; min-width: 0; }
.search { width: 127px; display: flex; border: 1px solid #555; border-right: 0; }
.search button { width: 14px; background: #aaa; border-right: 1px solid #555; }
.search svg { width: 6px; height: 10px; }
.search input { flex: 1; min-width: 0; border: 0; padding: 2px 3px 0; background: #f6f6f6; outline: 0; }
.search input::placeholder { color: #555; font-style: italic; }
.menu { display: flex; height: 21px; padding-left: 13px; gap: 25px; overflow: hidden; background: linear-gradient(#8b8b8b, #666); }
.menu a { color: #fff; text-decoration: none; white-space: nowrap; line-height: 22px; }

/* drawing tabs */
.doctabs {
  display: flex;
  align-items: flex-end;
  gap: 1px;
  height: 31px;
  padding-left: 15px;
  background: linear-gradient(#a2a2a2, #949494);
  border-bottom: 5px solid #5a5a5a;
}
.doctab { position: relative; display: flex; align-items: center; width: 136px; height: 22px; padding: 0 18px 0 17px; color: #111; }
.doctab span { position: relative; flex: 1; }
.doctab button { position: relative; }
.doctab button svg { width: 8px; height: 8px; }
.tabshape { position: absolute; inset: 0; width: 100%; height: 100%; }
.addtab { padding-bottom: 3px; }
.addtab svg { width: 24px; height: 17px; }

/* tool bars */
.toolrow { display: flex; height: 27px; padding-bottom: 3px; background: #666; overflow: hidden; }
.grip {
  flex: none;
  width: 9px;
  background: radial-gradient(circle, #222 1px, #fff0 1px) 0 0 / 3px 3px content-box, #707070;
  padding: 4px 1px 4px 2px;
}
.grip.wide { width: 11px; }
.tools { display: flex; align-items: center; flex: none; background: #ececec; border: 1px solid #555; border-width: 1px 0; height: 24px; }
.tools.grow { flex: 1; }
.tools button { width: 23px; height: 22px; flex: none; }
.tools .drop { width: 14px; }
.tools .muted, .tools .muted .caret { color: #888; }
.sep { width: 2px; height: 18px; margin: 0 2px; border-left: 1px solid #888; background: #fff; flex: none; }
.sep.narrow { margin: 0 1px; }
.tools .combo { height: 22px; color: #777; flex: none; padding-right: 2px; }
.tools .combo .caret { color: #999; }
.combo.style { width: 120px; font-size: 13px; padding-left: 18px; }
.combo.ws2 { width: 175px; padding-left: 8px; }
.combo.layer { width: 299px; padding-left: 3px; }
.combo.layer select { padding-left: 4px; font-size: 13px; }
.combo.color { width: 148px; padding-left: 0; font-family: "Liberation Serif", serif; }
.combo.color select { padding-left: 1px; }
.combo.linetype { width: auto; flex: 1; padding-left: 4px; overflow: hidden; }
.sample { width: 60px; height: 4px; }

/* work area */
.work { flex: 1; display: flex; align-items: flex-start; background: #6b6b6b; min-height: 500px; }
.palette { width: 25px; background: #ececec; border: 1px solid #333; }
.palette button { width: 23px; height: 22px; }
.grip.flat { display: block; width: auto; height: 9px; padding: 2px 4px; }
.viewport { flex: 1; align-self: stretch; margin: 2px 0 6px 5px; display: flex; flex-direction: column; border: 1px solid #999; border-width: 1px 0 1px 1px; }
.canvas { position: relative; flex: 1; background: #20272f; overflow: hidden; }
.drawing { position: absolute; inset: 0; width: 100%; height: 100%; }
.viewlabel { position: relative; color: #eee; padding: 6px 3px; }
.layouts { display: flex; height: 15px; background: linear-gradient(#f6f6f6, #e6e6e6); color: #111; }
.layouts button { height: 15px; line-height: 15px; }
.nav { width: 14px; border-right: 1px solid #aaa; }
.nav svg { width: 9px; height: 9px; fill: #666; }
.model { width: 46px; color: #fff; background: #20272f; clip-path: polygon(0 0, 100% 0, 88% 100%, 12% 100%); }
.layout { width: 38px; }
.slash { width: 8px; background: linear-gradient(117deg, #fff0 46%, #222 46% 56%, #fff0 56%); }
.scrollend { width: 14px; margin-left: auto; border-left: 1px solid #999; }

/* command line */
.command { position: relative; display: flex; height: 29px; background: #c4c4c4; }
.cmdgrip { width: 24px; background: #858585; display: grid; justify-items: center; align-content: space-between; padding: 4px 0 3px; }
.dots { width: 18px; height: 5px; background: radial-gradient(circle, #ccc 1px, #fff0 1px) 0 0 / 3px 3px; }
.cmdgrip svg { width: 10px; height: 10px; }
.lines { font: 13px/15px "Noto Sans CJK SC", sans-serif; color: #222; padding: 0 1px; min-width: 0; }
.lines p { margin: 0; height: 14px; line-height: 14px; white-space: pre; }
.lines b { font: 12px/14px "Liberation Mono", monospace; }
.brand { position: absolute; right: 4px; bottom: 5px; display: flex; gap: 6px; }
.cube { width: 36px; height: 38px; }
.brandtext { display: flex; flex-direction: column; justify-content: flex-end; gap: 4px; width: 86px; white-space: nowrap; }
.brandtext strong { font: 22px/24px "Noto Sans CJK SC", sans-serif; color: #2d9be8; }
.brandtext span { font: bold 9px/10px "Liberation Sans", sans-serif; color: #777; }

/* write block dialog */
.dialog {
  position: absolute;
  left: 382px;
  top: 181px;
  width: 419px;
  padding: 0 5px 6px;
  border: 1px solid #a7b2bc;
  border-radius: 7px;
  background:
    linear-gradient(#8b939b 0, #8b939b66 34%, #fff0 52%) 0 0 / 100% 100%,
    linear-gradient(#28323d, #36424e);
  box-shadow: 0 0 0 1px #0b0f14, 2px 3px 10px 3px #080b10;
  font: 12px/14px "Noto Sans CJK SC", sans-serif;
  color: #000;
}
.dialog::before {
  content: "";
  position: absolute;
  inset: 0 0 auto;
  height: 28px;
  border-radius: 6px 6px 0 0;
  background: linear-gradient(90deg, #7d858d, #59646f 22%, #293541 45%, #1e2a38 60%, #5a646d 80%, #8a9299);
}
.dlgtitle { position: relative; display: flex; align-items: center; height: 27px; padding-bottom: 2px; }
.dlgicon { width: 16px; height: 16px; display: grid; place-items: center; background: linear-gradient(#f5b0a8, #d4453c); }
.dlgicon svg { width: 13px; height: 14px; }
.dlgtitle h1 { flex: 1; margin: 0 0 0 6px; font-size: 12px; font-weight: normal; text-shadow: 0 0 6px #fff, 0 0 8px #fff; }
.close {
  align-self: flex-start;
  width: 48px;
  height: 18px;
  border: 1px solid #e3c9c5;
  border-top: 0;
  border-radius: 0 0 5px 5px;
  background: linear-gradient(#d99186, #c9584a 45%, #ac2317 50%, #c9503a);
}
.close svg { width: 13px; height: 10px; }
.client { position: relative; padding: 10px 11px 10px 9px; background: #f0f0f0; border: 1px solid #111; outline: 1px solid #b8c0c7; }
.dialog b { font-family: "Liberation Serif", serif; font-size: 13px; }
.group { margin: 0; border: 1px solid #d8dcdf; border-radius: 3px; min-width: 0; }
.group legend { padding: 0 2px; margin: 0; height: 14px; line-height: 14px; }
.source { padding: 0 7px 10px 5px; }
.source > legend { margin-left: 0; }
.row { display: flex; align-items: center; height: 20px; }
.row .radio { flex: 1; }
.radio { display: flex; align-items: center; height: 18px; white-space: pre; }
.radio input {
  appearance: none;
  width: 12px;
  height: 12px;
  margin: 0 4px 0 0;
  border: 1px solid #8c8f94;
  border-radius: 50%;
  background: radial-gradient(circle, #ddd, #f8f8f8 70%);
}
.radio input:checked { background: radial-gradient(circle, #6fc3f0 0, #173f63 3px, #e8eef3 4px); }
.radio.off { color: #777; }
.radio.off input { border-color: #c5c5c5; }
.combo.dlg { height: 20px; padding-right: 3px; }
.combo.dlg .caret { color: #111; }
.combo.dlg.off { width: 285px; border-color: #b4b4b4; }
.combo.dlg.off .caret { color: #999; }
.pair { display: flex; gap: 8px; margin-top: 2px; }
.pair .group { padding: 8px 6px 5px 8px; }
.pair legend { margin-left: -2px; }
.pair .base { width: 161px; padding-bottom: 13px; padding-right: 16px; }
.pair .objs { flex: 1; padding-bottom: 3px; }
.pick { display: flex; align-items: center; gap: 5px; height: 24px; white-space: pre; }
.pick label { padding-bottom: 4px; }
.iconbtn { width: 24px; height: 24px; border: 1px solid #777; border-radius: 2px; background: linear-gradient(#f3f3f3, #d5d5d5); }
.iconbtn svg { width: 18px; height: 18px; }
.quicksel { margin-left: auto; }
.coord { display: flex; align-items: center; height: 18px; margin-top: 6px; }
.coord label { width: 20px; padding-left: 1px; }
.coord input { flex: 1; min-width: 0; height: 18px; border: 1px solid #e0e3e6; border-top-color: #aaa; background: #fff; padding-left: 2px; outline: 0; font-family: "Liberation Mono", monospace; }
.pick + .radio { margin-top: 4px; }
.warn { display: flex; align-items: center; gap: 3px; height: 20px; margin: 3px 0 0; }
.warn svg { width: 16px; height: 18px; }
.target { margin-top: 7px; padding: 8px 6px 10px 9px; }
.target > legend { margin-left: -5px; }
.pathlabel { display: block; height: 18px; line-height: 18px; }
.pathrow { display: flex; gap: 5px; margin-top: 11px; }
.edit { flex: 1; background: #fff; border-color: #7fa6cc; padding-left: 2px; }
.selected { flex: 1; display: flex; }
.selected input { width: 152px; height: 14px; border: 0; outline: 0; background: #3b97e6; color: #fff; }
.unitrow { display: flex; align-items: center; justify-content: space-between; margin-top: 10px; padding-right: 29px; }
.combo.unit { width: 258px; border-color: #707070; background: linear-gradient(#f2f2f2, #d2d2d2); padding-left: 3px; }
.actions { display: flex; justify-content: flex-end; gap: 9px; margin-top: 15px; }
.btn { width: 73px; height: 20px; border: 1px solid #777; border-radius: 3px; background: linear-gradient(#f4f4f4, #eaeaea 48%, #dadada 52%, #cfcfcf); display: flex; align-items: center; justify-content: center; }
.btn.default { border-color: #3c8ebb; background: linear-gradient(#eef3f6, #c7dbe6); }
.btn.browse { width: 24px; }

/* marker strokes drawn over the window */
.notes { position: absolute; left: 0; top: 0; pointer-events: none; }
.notetext { font: 27px "Noto Sans CJK SC", sans-serif; fill: #d8232b; }
```
